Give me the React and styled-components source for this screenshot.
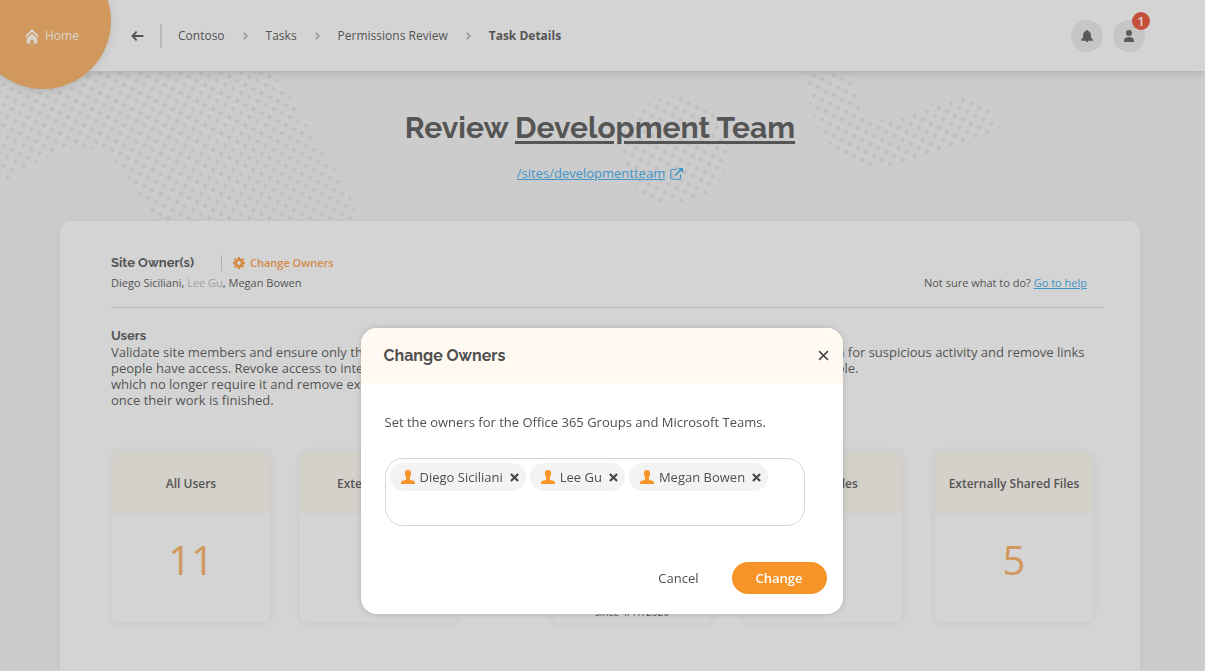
import React from "react";
import styled, { createGlobalStyle, css } from "styled-components";

const Global = createGlobalStyle`
  *, *::before, *::after { box-sizing: border-box; }
  body {
    margin: 0;
    background: #cccccc;
    color: #555555;
    font-family: "Open Sans", "Noto Sans", sans-serif;
    font-size: 12px;
    line-height: 16px;
  }
  button, input { font: inherit; color: inherit; }
  h1, h2, h3, p, ol, ul { margin: 0; padding: 0; }
`;

const headingFont = css`
  font-family: Raleway, Lato, sans-serif;
  font-weight: 700;
`;

const Page = styled.div`
  position: relative;
  display: flex;
  flex-direction: column;
  min-height: 100vh;
  overflow: hidden;
`;

const Header = styled.header`
  position: relative;
  z-index: 1;
  display: flex;
  align-items: center;
  height: 71px;
  padding-right: 60px;
  background: #d4d4d4;
  box-shadow: 0 2px 8px rgba(0, 0, 0, 0.14);
`;

const HomeLink = styled.a`
  position: relative;
  display: flex;
  align-items: center;
  gap: 6px;
  width: 111px;
  padding: 1px 0 0 25px;
  color: #d9d5d0;
  text-decoration: none;

  &::before {
    content: "";
    position: absolute;
    z-index: -1;
    right: 0;
    bottom: -45px;
    width: 136px;
    height: 136px;
    border-radius: 50%;
    background: #d0985c;
    box-shadow: 0 2px 8px rgba(0, 0, 0, 0.1);
  }
`;

const BackButton = styled.button`
  display: flex;
  margin-left: 20px;
  padding: 0;
  border: 0;
  background: none;
`;

const Crumbs = styled.ol`
  display: flex;
  align-items: center;
  gap: 18px;
  margin-left: 16px;
  padding-left: 16px;
  border-left: 2px solid #bbbbbb;
  line-height: 24px;
  list-style: none;
`;

const Crumb = styled.li`
  display: flex;
  align-items: center;
  gap: 18px;
  font-weight: ${(p) => (p.$current ? 700 : 400)};
`;

const CrumbLink = styled.a`
  color: inherit;
  text-decoration: none;
`;

const HeaderActions = styled.div`
  display: flex;
  gap: 10px;
  margin-left: auto;
`;

const RoundButton = styled.button`
  position: relative;
  display: grid;
  place-items: center;
  width: 32px;
  height: 32px;
  padding: 0;
  border: 0;
  border-radius: 50%;
  background: #c6c6c6;
`;

const Badge = styled.span`
  position: absolute;
  top: -8px;
  right: -5px;
  width: 18px;
  height: 18px;
  border-radius: 50%;
  background: #c5503c;
  color: #dcd4d2;
  font-size: 13px;
  font-weight: 600;
  line-height: 18px;
`;

const Dots = styled.svg`
  position: absolute;
  top: 0;
  left: 0;
  width: 1010px;
  height: 230px;
`;

const Intro = styled.section`
  position: relative;
  display: flex;
  flex-direction: column;
  align-items: center;
  gap: 17px;
  padding: 37px 5px 39px 0;
`;

const Title = styled.h1`
  ${headingFont}
  font-size: 30px;
  line-height: 40px;
`;

const TitleLink = styled.a`
  color: inherit;
  text-decoration-thickness: 3px;
  text-underline-offset: 3px;
`;

const SiteLink = styled.a`
  display: flex;
  align-items: center;
  gap: 5px;
  color: #3f95c9;
  font-size: 13px;
  line-height: 17px;
`;

const Panel = styled.main`
  position: relative;
  flex: 1;
  margin: 0 65px 0 60px;
  padding: 34px 36px 47px 51px;
  border-radius: 10px 10px 0 0;
  background: #d4d4d4;
  box-shadow: 0 0 6px rgba(0, 0, 0, 0.07);
`;

const OwnersBar = styled.section`
  display: flex;
  align-items: flex-end;
  justify-content: space-between;
  padding: 0 17px 16px 0;
  border-bottom: 1px solid #b8b8b8;
  font-size: 11px;
`;

const OwnersHead = styled.div`
  display: flex;
  align-items: center;
  margin-bottom: 4px;
`;

const SectionTitle = styled.h2`
  ${headingFont}
  font-size: 13px;
  line-height: 16px;
`;

const TextButton = styled.button`
  display: flex;
  align-items: center;
  gap: 5px;
  margin-left: 27px;
  padding: 0 0 0 11px;
  border: 0;
  border-left: 1px solid #b0b0b0;
  background: none;
  color: #d28a48;
  font-weight: 600;
`;

const Muted = styled.span`
  color: #a2a2a2;
`;

const HelpLink = styled.a`
  color: #3f95c9;
`;

const Columns = styled.div`
  display: grid;
  grid-template-columns: 441fr 552fr;
  padding-top: 20px;
`;

const Column = styled.section`
  font-size: 13px;
  white-space: nowrap;
`;

const Copy = styled.p`
  height: 64px;
  margin-bottom: 44px;
`;

const Stats = styled.div`
  display: flex;
  gap: ${(p) => p.$gap}px;
  padding-left: 1px;
`;

const Stat = styled.article`
  width: 158px;
  height: 171px;
  overflow: hidden;
  border-radius: 7px;
  box-shadow: 0 0 7px rgba(0, 0, 0, 0.08);
  text-align: center;
`;

const StatTitle = styled.h3`
  padding: 24px 0 22px;
  background: #d4d0ca;
  font-size: 12px;
  font-weight: 600;
  line-height: 16px;
`;

const StatValue = styled.p`
  padding-top: 20px;
  color: #d0985c;
  font-size: 40px;
  line-height: 52px;
`;

const StatNote = styled.p`
  padding-top: 18px;
  font-size: 10px;
  line-height: 16px;
`;

const Overlay = styled.div`
  position: fixed;
  z-index: 2;
  inset: 0;
  display: flex;
  align-items: flex-start;
  justify-content: center;
  padding: 328px 2px 0 0;
`;

const Dialog = styled.div`
  width: 482px;
  max-width: 100%;
  overflow: hidden;
  border-radius: 16px;
  background: #ffffff;
  box-shadow: 0 0 6px rgba(0, 0, 0, 0.16);
  color: #4f4f4f;
  font-size: 13px;
`;

const DialogHead = styled.div`
  display: flex;
  align-items: center;
  justify-content: space-between;
  height: 55px;
  padding: 0 14px 0 23px;
  background: #fff9f2;
`;

const DialogTitle = styled.h2`
  ${headingFont}
  font-size: 16px;
`;

const IconButton = styled.button`
  display: flex;
  padding: 0;
  border: 0;
  background: none;
`;

const DialogBody = styled.div`
  padding: 31px 38px 36px 24px;
`;

const TokenBox = styled.div`
  display: flex;
  flex-wrap: wrap;
  align-content: flex-start;
  gap: 4px;
  height: 68px;
  margin-top: 28px;
  padding: 4px;
  border: 1px solid #d6d6d6;
  border-radius: 18px;
`;

const Token = styled.span`
  display: flex;
  align-items: center;
  gap: 5px;
  height: 28px;
  padding: 0 7px 0 11px;
  border-radius: 14px;
  background: #f3f3f3;
`;

const TokenName = styled.span`
  margin-right: 2px;
`;

const TokenInput = styled.input`
  flex: 1;
  min-width: 120px;
  height: 24px;
  padding: 0 8px;
  border: 0;
  outline: 0;
  background: none;
`;

const DialogActions = styled.div`
  display: flex;
  justify-content: flex-end;
  gap: 9px;
  padding: 0 16px 20px;
`;

const Action = styled.button`
  height: 32px;
  padding: 0 24px;
  border: 0;
  border-radius: 16px;
  background: ${(p) => (p.$primary ? "#f79428" : "transparent")};
  color: ${(p) => (p.$primary ? "#ffffff" : "inherit")};
  font-weight: ${(p) => (p.$primary ? 600 : 400)};
`;

const Chevron = () => (
  <svg width="5" height="8" viewBox="0 0 5 8" fill="none" stroke="#929292" strokeWidth="1.4" aria-hidden="true">
    <path d="M.7.7 4 4 .7 7.3" />
  </svg>
);

const HomeIcon = () => (
  <svg width="14" height="15" viewBox="0 0 14 15" aria-hidden="true">
    <path d="M.7 7.600 7 1.400l6.300 6.200" fill="none" stroke="#d9d5d0" strokeWidth="1.900" />
    <path d="M7 4.400 12.200 9.300V14.400H8.700V10.800H5.300V14.400H1.800V9.300Z" fill="#d9d5d0" />
  </svg>
);

const BackIcon = () => (
  <svg width="13" height="10" viewBox="0 0 13 10" fill="none" stroke="#505050" strokeWidth="1.8" aria-hidden="true">
    <path d="M5.600.7 1.400 5l4.200 4.300M1.500 5H12.400" />
  </svg>
);

const BellIcon = () => (
  <svg width="12" height="12" viewBox="0 0 12 12" fill="#5a5a5a" aria-hidden="true">
    <path d="M6 0c.7 0 1 .4 1 1C8.900 1.500 9.800 3 9.800 5c0 2.300.5 3.400 2.200 4.700v1H7.200C7.100 11.600 6.700 12 6 12s-1.100-.4-1.200-1.300H0v-1C1.700 8.400 2.200 7.300 2.200 5c0-2 .9-3.500 2.800-4 0-.6.3-1 1-1z" />
  </svg>
);

const UserIcon = () => (
  <svg width="10" height="12" viewBox="0 0 10 12" fill="#5a5a5a" aria-hidden="true">
    <circle cx="5" cy="3" r="3" />
    <path d="M0 12v-1.500C0 8.300 2.200 7 5 7s5 1.300 5 3.500V12z" />
  </svg>
);

const ExternalIcon = () => (
  <svg width="13" height="12" viewBox="0 0 13 12" fill="none" stroke="#3f95c9" aria-hidden="true">
    <path d="M7 1.500H2.300A1.600 1.600 0 0 0 .7 3.100v6.600a1.600 1.600 0 0 0 1.600 1.600h6.600a1.600 1.600 0 0 0 1.600-1.600V6.500" strokeWidth="1.100" />
    <path d="M5 7.500 10.500 2" strokeWidth="1.700" />
    <path d="M8 0h5v5z" fill="#3f95c9" stroke="none" />
  </svg>
);

const GearIcon = () => (
  <svg width="12" height="12" viewBox="-6 -6 12 12" fill="none" stroke="#d28a40" aria-hidden="true">
    <circle r="3.200" strokeWidth="2.600" />
    <path
      d="M0-4V-6M0 4V6M-4 0H-6M4 0H6M-2.900-2.900-4.300-4.300M2.900 2.900 4.300 4.300M-2.900 2.900-4.300 4.300M2.900-2.900 4.300-4.300"
      strokeWidth="2.300"
    />
  </svg>
);

const PersonIcon = () => (
  <svg width="14" height="14" viewBox="0 0 14 14" fill="#f79428" aria-hidden="true">
    <path d="M7 0c2 0 3.100 1 3.100 3 0 1.800-.5 3.200-1.200 4.200v2c.3.900 1.600 1 3.200 1.400 1.500.5 1.900 1.400 1.900 3.400H0c0-2 .4-2.900 1.900-3.400 1.600-.4 2.900-.5 3.200-1.400v-2C4.400 6.200 3.900 4.800 3.900 3 3.900 1 5 0 7 0z" />
  </svg>
);

const CrossIcon = ({ size, weight }) => (
  <svg width={size} height={size} viewBox="0 0 10 10" stroke="#484848" strokeWidth={weight} aria-hidden="true">
    <path d="M1 1 9 9M9 1 1 9" />
  </svg>
);

const DotBackdrop = () => (
  <Dots aria-hidden="true">
    <defs>
      <pattern id="dots" width="9.02" height="9.02" patternUnits="userSpaceOnUse" patternTransform="translate(241.3 93) rotate(26.57) translate(-4.5 -4.5)">
        <circle cx="4.5" cy="4.5" r="2.1" fill="#bfbfbf" />
      </pattern>
      <pattern id="dots-right" href="#dots" patternTransform="translate(680.7 99.3) rotate(26.57) translate(-4.5 -4.5)" />
    </defs>
    <path
      fill="url(#dots)"
      d="M0 60H255L276 77 290 98 301 115 318 143 335 170 352 200 359 230H155L145 205 133 187 123 170Q110 150 85 148 62 147 33 165L0 184Z"
    />
    <g fill="url(#dots-right)">
      <circle cx="675" cy="150" r="54" />
      <path d="M798 60H848L853 80 860 107Q866 121 883 120 905 114 930 104 950 96 965 97 990 103 1000 129L965 141 915 160Q890 168 870 166 848 162 836 152 818 132 812 110Z" />
    </g>
  </Dots>
);

const owners = ["Diego Siciliani", "Lee Gu", "Megan Bowen"];
const trail = ["Contoso", "Tasks", "Permissions Review"];

export default function App() {
  return (
    <>
      <Global />
      <Page>
        <DotBackdrop />
        <Header>
          <HomeLink href="#home">
            <HomeIcon />
            Home
          </HomeLink>
          <BackButton type="button" aria-label="Back">
            <BackIcon />
          </BackButton>
          <nav aria-label="Breadcrumb">
            <Crumbs>
              {trail.map((name) => (
                <Crumb key={name}>
                  <CrumbLink href="#crumb">{name}</CrumbLink>
                  <Chevron />
                </Crumb>
              ))}
              <Crumb $current aria-current="page">Task Details</Crumb>
            </Crumbs>
          </nav>
          <HeaderActions>
            <RoundButton type="button" aria-label="Notifications">
              <BellIcon />
            </RoundButton>
            <RoundButton type="button" aria-label="Account">
              <UserIcon />
              <Badge>1</Badge>
            </RoundButton>
          </HeaderActions>
        </Header>

        <Intro>
          <Title>
            Review <TitleLink href="#team">Development Team</TitleLink>
          </Title>
          <SiteLink href="#site">
            /sites/developmentteam
            <ExternalIcon />
          </SiteLink>
        </Intro>

        <Panel>
          <OwnersBar>
            <div>
              <OwnersHead>
                <SectionTitle>Site Owner(s)</SectionTitle>
                <TextButton type="button">
                  <GearIcon />
                  Change Owners
                </TextButton>
              </OwnersHead>
              <p>
                Diego Siciliani, <Muted>Lee Gu</Muted>, Megan Bowen
              </p>
            </div>
            <p>
              Not sure what to do? <HelpLink href="#help">Go to help</HelpLink>
            </p>
          </OwnersBar>

          <Columns>
            <Column>
              <SectionTitle>Users</SectionTitle>
              <Copy>
                Validate site members and ensure only the
                <br />
                people have access. Revoke access to internal
                <br />
                which no longer require it and remove external
                <br />
                once their work is finished.
              </Copy>
              <Stats $gap={30}>
                <Stat>
                  <StatTitle>All Users</StatTitle>
                  <StatValue>11</StatValue>
                </Stat>
                <Stat>
                  <StatTitle>External Users</StatTitle>
                </Stat>
              </Stats>
            </Column>
            <Column>
              <SectionTitle>Files</SectionTitle>
              <Copy>
                Review the lists of externally shared files. Search for suspicious activity and remove links
                <br />
                to those older files which should not be accessible.
              </Copy>
              <Stats $gap={33}>
                <Stat>
                  <StatTitle>Activity</StatTitle>
                  <StatValue>0</StatValue>
                  <StatNote>since 4/17/2020</StatNote>
                </Stat>
                <Stat>
                  <StatTitle>Shared Files</StatTitle>
                </Stat>
                <Stat>
                  <StatTitle>Externally Shared Files</StatTitle>
                  <StatValue>5</StatValue>
                </Stat>
              </Stats>
            </Column>
          </Columns>
        </Panel>
      </Page>

      <Overlay>
        <Dialog role="dialog" aria-modal="true" aria-labelledby="dialog-title">
          <DialogHead>
            <DialogTitle id="dialog-title">Change Owners</DialogTitle>
            <IconButton type="button" aria-label="Close">
              <CrossIcon size={11} weight={1.4} />
            </IconButton>
          </DialogHead>
          <DialogBody>
            <p>Set the owners for the Office 365 Groups and Microsoft Teams.</p>
            <TokenBox>
              {owners.map((name) => (
                <Token key={name}>
                  <PersonIcon />
                  <TokenName>{name}</TokenName>
                  <IconButton type="button" aria-label={`Remove ${name}`}>
                    <CrossIcon size={9} weight={2.4} />
                  </IconButton>
                </Token>
              ))}
              <TokenInput type="text" aria-label="Add an owner" />
            </TokenBox>
          </DialogBody>
          <DialogActions>
            <Action type="button">Cancel</Action>
            <Action type="button" $primary>Change</Action>
          </DialogActions>
        </Dialog>
      </Overlay>
    </>
  );
}
